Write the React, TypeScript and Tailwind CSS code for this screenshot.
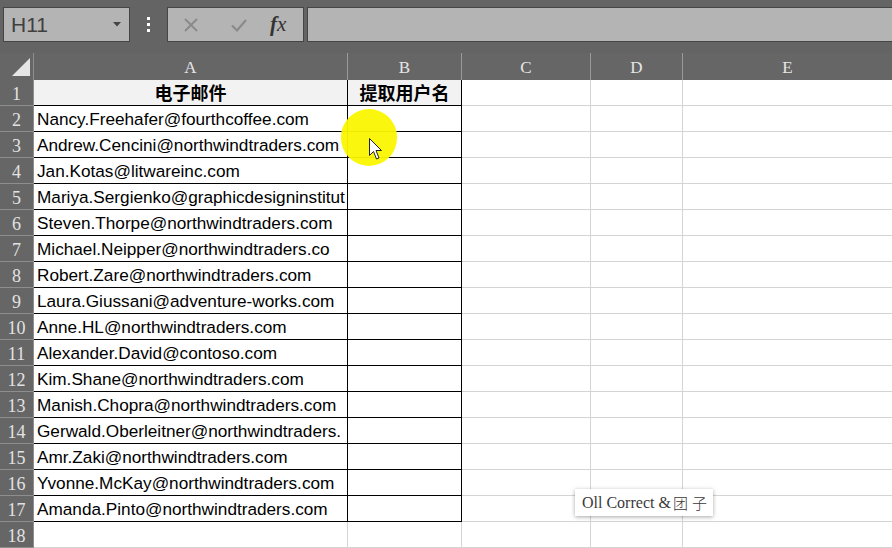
import React from "react";

const emails = [
  "Nancy.Freehafer@fourthcoffee.com",
  "Andrew.Cencini@northwindtraders.com",
  "Jan.Kotas@litwareinc.com",
  "Mariya.Sergienko@graphicdesigninstitut",
  "Steven.Thorpe@northwindtraders.com",
  "Michael.Neipper@northwindtraders.co",
  "Robert.Zare@northwindtraders.com",
  "Laura.Giussani@adventure-works.com",
  "Anne.HL@northwindtraders.com",
  "Alexander.David@contoso.com",
  "Kim.Shane@northwindtraders.com",
  "Manish.Chopra@northwindtraders.com",
  "Gerwald.Oberleitner@northwindtraders.",
  "Amr.Zaki@northwindtraders.com",
  "Yvonne.McKay@northwindtraders.com",
  "Amanda.Pinto@northwindtraders.com",
];

const sans = "font-['Liberation_Sans',Arial,sans-serif]";
const serif = "font-['Liberation_Serif','Times_New_Roman',serif]";
const cjk = "font-['Noto_Sans_CJK_SC','Noto_Sans',sans-serif]";

function RowHeader({ n }: { n: number }) {
  return (
    <div
      className={`w-[34px] shrink-0 h-full bg-[#666666] border-r border-b border-[#8e8e8e] flex items-center justify-center pt-[3px] text-[18px] leading-none text-[#e2e2e2] ${serif}`}
    >
      {n}
    </div>
  );
}

function Row({ n }: { n: number }) {
  const inTable = n <= 17;
  const tb = inTable ? "border-black" : "border-[#d4d4d4]";
  if (n === 1) {
    return (
      <div className="flex h-[26px]">
        <RowHeader n={n} />
        <div
          className={`w-[314px] shrink-0 h-full border-r border-b border-black bg-[#f2f2f2] flex items-center justify-center font-bold text-[18px] text-black ${cjk}`}
        >
          电子邮件
        </div>
        <div
          className={`w-[114px] shrink-0 h-full border-r border-b border-black bg-[#f2f2f2] flex items-center justify-center font-bold text-[18px] text-black ${cjk}`}
        >
          提取用户名
        </div>
        <div className="w-[129px] shrink-0 h-full border-r border-b border-[#d4d4d4]" />
        <div className="w-[92px] shrink-0 h-full border-r border-b border-[#d4d4d4]" />
        <div className="flex-1 h-full border-b border-[#d4d4d4]" />
      </div>
    );
  }
  const email = inTable ? emails[n - 2] : "";
  return (
    <div className="flex h-[26px]">
      <RowHeader n={n} />
      <div
        className={`w-[314px] shrink-0 h-full border-r border-b ${tb} overflow-hidden whitespace-nowrap pl-[3px] pt-[2px] text-[17.2px] leading-[23px] text-black ${sans}`}
      >
        {email}
      </div>
      <div className={`w-[114px] shrink-0 h-full border-r border-b ${tb}`} />
      <div className="w-[129px] shrink-0 h-full border-r border-b border-[#d4d4d4]" />
      <div className="w-[92px] shrink-0 h-full border-r border-b border-[#d4d4d4]" />
      <div className="flex-1 h-full border-b border-[#d4d4d4]" />
    </div>
  );
}

export default function App() {
  const rows = Array.from({ length: 18 }, (_, i) => i + 1);
  return (
    <div className="relative w-[892px] h-[548px] overflow-hidden bg-white">
      {/* Toolbar */}
      <div className="h-[53px] bg-[#646464] flex items-start pt-[7px] pl-[3px]">
        <div className="w-[127px] h-[35px] shrink-0 bg-[#b4b4b4] border border-[#454545] flex items-center justify-between pl-[7px] pr-[8px]">
          <span className={`text-[21px] leading-none text-[#404040] ${sans}`}>H11</span>
          <svg width="8" height="5" viewBox="0 0 8 5">
            <path d="M0 0 H8 L4 4.5 Z" fill="#444" />
          </svg>
        </div>
        <div className="w-[37px] h-[35px] shrink-0 flex flex-col items-center justify-center gap-[3px]">
          <div className="w-[3px] h-[3px] bg-white" />
          <div className="w-[3px] h-[3px] bg-white" />
          <div className="w-[3px] h-[3px] bg-white" />
        </div>
        <div className="w-[137px] h-[35px] shrink-0 bg-[#b4b4b4] border border-[#454545] flex items-center pl-[15px]">
          <svg width="16" height="16" viewBox="0 0 16 16" className="mr-[31px]">
            <path d="M2 2 L14 14 M14 2 L2 14" stroke="#8a8a8a" strokeWidth="1.8" fill="none" />
          </svg>
          <svg width="18" height="16" viewBox="0 0 18 16" className="mr-[22px]">
            <path d="M2 8.5 L7 13.5 L16 3" stroke="#8a8a8a" strokeWidth="2.2" fill="none" />
          </svg>
          <span className={`italic text-[21px] leading-none text-[#333] ${serif}`}>
            <span className="font-bold">f</span>x
          </span>
        </div>
        <div className="flex-1 h-[35px] ml-[3px] -mr-[2px] bg-[#b4b4b4] border border-[#454545]" />
      </div>

      {/* Column headers */}
      <div className={`flex h-[27px] bg-[#666666] text-[17px] text-[#e6e6e6] ${serif}`}>
        <div className="w-[34px] shrink-0 h-full relative border-r border-[#8e8e8e]">
          <svg width="20" height="20" viewBox="0 0 20 20" className="absolute left-[11px] top-[4px]">
            <path d="M19 1 L19 19 L1 19 Z" fill="#e6e6e6" />
          </svg>
        </div>
        <div className="w-[314px] shrink-0 h-full border-r border-[#9a9a9a] flex items-center justify-center pt-[3px]">A</div>
        <div className="w-[114px] shrink-0 h-full border-r border-[#9a9a9a] flex items-center justify-center pt-[3px]">B</div>
        <div className="w-[129px] shrink-0 h-full border-r border-[#9a9a9a] flex items-center justify-center pt-[3px]">C</div>
        <div className="w-[92px] shrink-0 h-full border-r border-[#9a9a9a] flex items-center justify-center pt-[3px]">D</div>
        <div className="flex-1 h-full flex items-center justify-center pt-[3px]">E</div>
      </div>

      {/* Grid rows */}
      <div className="flex flex-col">
        {rows.map((n) => (
          <Row key={n} n={n} />
        ))}
      </div>

      {/* Cursor highlight */}
      <div className="absolute left-[341px] top-[109px] w-[56px] h-[57px] rounded-full bg-[#fbf500] opacity-95" />
      <svg
        width="14"
        height="23"
        viewBox="0 0 14 23"
        className="absolute left-[369px] top-[138px]"
      >
        <path
          d="M0.5 0.5 L0.5 17.5 L4.5 13.5 L7.5 21 L10 20 L7 12.5 L12.5 12.5 Z"
          fill="white"
          stroke="#222"
          strokeWidth="1"
          strokeLinejoin="round"
        />
      </svg>

      {/* Watermark */}
      <div className="absolute left-[575px] top-[489px] w-[138px] h-[27px] bg-white shadow-[0_1px_4px_rgba(0,0,0,0.35)] flex items-center pl-[7px]">
        <span className={`text-[16px] leading-none text-[#3a3a3a] ${serif}`}>Oll Correct &amp;</span>
        <span className="text-[15px] leading-none text-[#3a3a3a] ml-[2px] font-['Noto_Sans_CJK_SC',serif] font-light tracking-[4px]">团子</span>
      </div>
    </div>
  );
}
